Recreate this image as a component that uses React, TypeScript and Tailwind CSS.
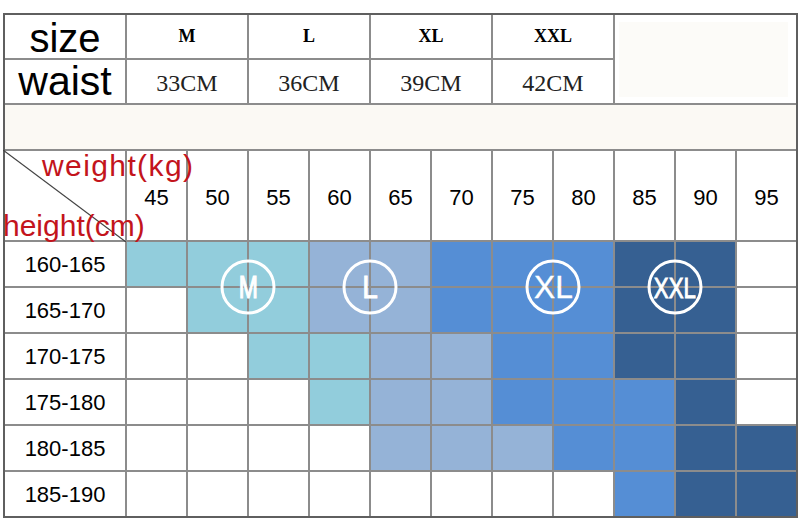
import { Fragment } from "react";

const weights = ["45", "50", "55", "60", "65", "70", "75", "80", "85", "90", "95"];

const sizes = [
  { name: "M", waist: "33CM" },
  { name: "L", waist: "36CM" },
  { name: "XL", waist: "39CM" },
  { name: "XXL", waist: "42CM" },
];

// c = M (cyan), l = L, x = XL, d = XXL, . = empty
const rows = [
  { label: "160-165", cells: "cccllxxxdd." },
  { label: "165-170", cells: ".ccllxxxdd." },
  { label: "170-175", cells: "..ccllxxdd." },
  { label: "175-180", cells: "...cllxxxd." },
  { label: "180-185", cells: "....lllxxdd" },
  { label: "185-190", cells: "........xdd" },
];

const fills: Record<string, string> = {
  c: "bg-[#92cddc]",
  l: "bg-[#95b3d7]",
  x: "bg-[#558ed5]",
  d: "bg-[#366092]",
  ".": "bg-white",
};

// circle badges sit on the corner shared by four cells (first row, column index)
const badges: Record<number, { text: string; cls: string }> = {
  1: { text: "M", cls: "text-[31px] scale-x-[0.74] [-webkit-text-stroke:1.2px_white]" },
  3: { text: "L", cls: "text-[31px] scale-x-[0.9] [-webkit-text-stroke:0.9px_white]" },
  6: { text: "XL", cls: "text-[31px] scale-x-[1.02] [-webkit-text-stroke:0.4px_white]" },
  8: { text: "XXL", cls: "text-[30px] scale-x-[0.74] [-webkit-text-stroke:1px_white]" },
};

function Badge({ text, cls }: { text: string; cls: string }) {
  return (
    <div className="absolute left-[calc(100%+1px)] top-[calc(100%+1px)] z-10 flex h-[55px] w-[55px] -translate-x-1/2 -translate-y-1/2 items-center justify-center rounded-full border-[3px] border-white">
      <span className={`leading-none text-white ${cls}`}>{text}</span>
    </div>
  );
}

export default function App() {
  return (
    <div className="min-h-[520px] bg-white pt-[13px] font-['Liberation_Sans',Arial,sans-serif]">
      <div className="ml-[3px] w-[795px] border-2 border-[#5f5f5f]">
        <div className="grid grid-cols-[120px_repeat(11,1fr)] grid-rows-[43px_43px_44px_89px_repeat(6,44px)] gap-[2px] bg-[#8c8c8c]">
          {/* size row */}
          <div className="flex items-center justify-center bg-white pt-[3px] text-[40px] leading-[40px] text-black">
            size
          </div>
          {sizes.map((s) => (
            <div
              key={s.name}
              className="col-span-2 flex items-center justify-center bg-white font-['Liberation_Serif',serif] text-[18px] font-bold text-black"
            >
              {s.name}
            </div>
          ))}
          <div className="col-span-3 row-span-2 bg-white p-[7px_8px_6px_4px]">
            <div className="h-full w-full bg-[#fcfbf8]" />
          </div>

          {/* waist row */}
          <div className="flex items-center justify-center bg-white pb-[2px] text-[41px] leading-[40px] text-black">
            waist
          </div>
          {sizes.map((s) => (
            <div
              key={s.name}
              className="col-span-2 flex items-center justify-center bg-white pt-[2px] font-['Liberation_Serif',serif] text-[24px] text-[#222]"
            >
              {s.waist}
            </div>
          ))}

          {/* spacer row */}
          <div className="col-span-12 bg-[#fbf9f4]" />

          {/* weight / height header */}
          <div className="relative bg-white">
            <svg
              className="absolute left-[-2px] top-[-1px] h-[calc(100%+3px)] w-[calc(100%+3px)]"
              preserveAspectRatio="none"
              viewBox="0 0 100 100"
            >
              <line x1="0" y1="0" x2="100" y2="100" stroke="#444" strokeWidth="1.2" vectorEffect="non-scaling-stroke" />
            </svg>
            <span className="absolute left-[37px] top-[0px] z-10 whitespace-nowrap text-[30px] leading-none tracking-[1.4px] text-[#c3141c]">
              weight(kg)
            </span>
            <span className="absolute left-[-2px] top-[60px] z-10 whitespace-nowrap text-[30px] leading-none text-[#c3141c]">
              height(cm)
            </span>
          </div>
          {weights.map((w) => (
            <div
              key={w}
              className="flex items-center justify-center bg-white pt-[4px] text-[22px] text-black"
            >
              {w}
            </div>
          ))}

          {/* height rows */}
          {rows.map((r, ri) => (
            <Fragment key={r.label}>
              <div className="flex items-center justify-center bg-white text-[22px] text-black">
                {r.label}
              </div>
              {r.cells.split("").map((c, ci) => (
                <div key={ci} className={`relative ${fills[c]}`}>
                  {ri === 0 && badges[ci] && <Badge {...badges[ci]} />}
                </div>
              ))}
            </Fragment>
          ))}
        </div>
      </div>
    </div>
  );
}
